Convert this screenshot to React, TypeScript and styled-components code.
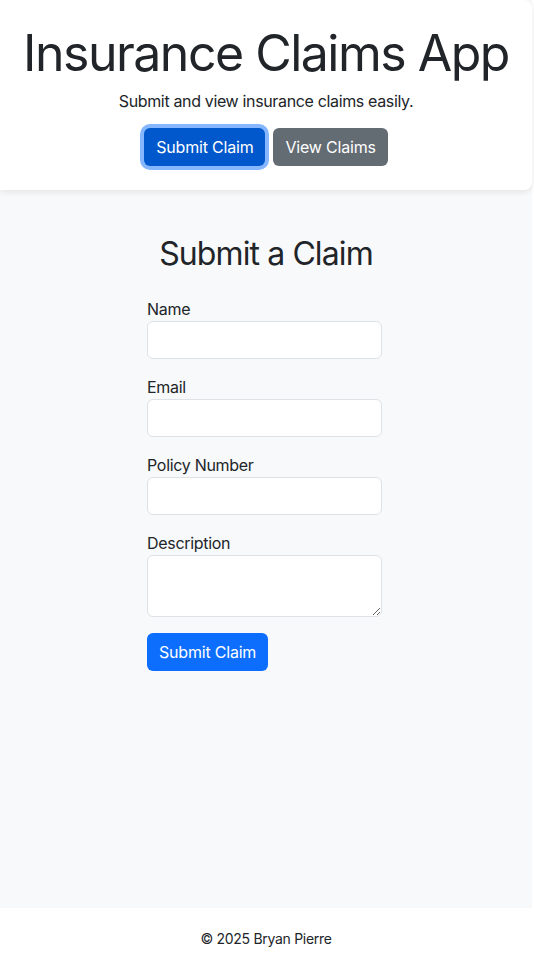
import React from "react";
import styled, { createGlobalStyle } from "styled-components";

const Global = createGlobalStyle`
  html, body { margin: 0; padding: 0; background: #ffffff; }
  body { font-family: Inter, "Noto Sans", sans-serif; color: #212529; -webkit-font-smoothing: antialiased; }
  * { box-sizing: border-box; }
`;

const Page = styled.div`
  width: 532px;
  min-height: 965px;
  display: flex;
  flex-direction: column;
  background: #f8f9fa;
`;

const Header = styled.header`
  background: #ffffff;
  border-radius: 0 8px 8px 0;
  box-shadow: 0 2px 6px rgba(0, 0, 0, 0.09);
  padding: 22px 0 24px;
  display: flex;
  flex-direction: column;
  align-items: center;
  position: relative;
  z-index: 1;
`;

const Title = styled.h1`
  margin: 0;
  font-size: 50px;
  font-weight: 400;
  line-height: 62px;
  letter-spacing: -1.5px;
`;

const Subtitle = styled.p`
  margin: 5px 0 15px;
  font-size: 16px;
  line-height: 24px;
  letter-spacing: -0.35px;
`;

const ButtonRow = styled.div`
  display: flex;
  gap: 8px;
`;

const Btn = styled.button<{ $variant: "primary" | "active" | "secondary" }>`
  font-family: inherit;
  font-size: 16px;
  line-height: 24px;
  letter-spacing: -0.2px;
  padding: 6px 12px;
  height: 38px;
  border: none;
  border-radius: 6px;
  color: #ffffff;
  cursor: pointer;
  background: ${(p) =>
    p.$variant === "active" ? "#0058cc" : p.$variant === "secondary" ? "#636b73" : "#0d6efd"};
  box-shadow: ${(p) => (p.$variant === "active" ? "0 0 0 4px #86b7fe" : "none")};
`;

const Main = styled.main`
  flex: 1;
  display: flex;
  flex-direction: column;
  align-items: center;
  padding-top: 45px;
`;

const Heading = styled.h2`
  margin: 0 0 24px;
  font-size: 32px;
  font-weight: 400;
  line-height: 38px;
  letter-spacing: -0.9px;
`;

const Form = styled.form`
  width: 235px;
  margin-right: 3px;
  display: flex;
  flex-direction: column;
  gap: 16px;
`;

const Field = styled.div`
  display: flex;
  flex-direction: column;
`;

const Label = styled.label`
  font-size: 16px;
  line-height: 24px;
  letter-spacing: -0.3px;
`;

const Input = styled.input`
  height: 38px;
  width: 100%;
  border: 1px solid #dee2e6;
  border-radius: 6px;
  background: #ffffff;
  font-family: inherit;
  font-size: 16px;
  padding: 6px 12px;
`;

const TextArea = styled.textarea`
  height: 62px;
  width: 100%;
  border: 1px solid #dee2e6;
  border-radius: 6px;
  background: #ffffff;
  font-family: inherit;
  font-size: 16px;
  padding: 6px 12px;
  display: block;
`;

const SubmitRow = styled.div`
  display: flex;
`;

const Footer = styled.footer`
  height: 57px;
  background: #ffffff;
  display: flex;
  align-items: center;
  justify-content: center;
  font-size: 14px;
  letter-spacing: -0.3px;
  color: #212529;
  padding-top: 3px;
`;

export default function App() {
  return (
    <>
      <Global />
      <Page>
        <Header>
          <Title>Insurance Claims App</Title>
          <Subtitle>Submit and view insurance claims easily.</Subtitle>
          <ButtonRow>
            <Btn $variant="active">Submit Claim</Btn>
            <Btn $variant="secondary">View Claims</Btn>
          </ButtonRow>
        </Header>
        <Main>
          <Heading>Submit a Claim</Heading>
          <Form onSubmit={(e) => e.preventDefault()}>
            <Field>
              <Label htmlFor="name">Name</Label>
              <Input id="name" type="text" />
            </Field>
            <Field>
              <Label htmlFor="email">Email</Label>
              <Input id="email" type="email" />
            </Field>
            <Field>
              <Label htmlFor="policy">Policy Number</Label>
              <Input id="policy" type="text" />
            </Field>
            <Field>
              <Label htmlFor="desc">Description</Label>
              <TextArea id="desc" />
            </Field>
            <SubmitRow>
              <Btn $variant="primary" type="submit">Submit Claim</Btn>
            </SubmitRow>
          </Form>
        </Main>
        <Footer>© 2025 Bryan Pierre</Footer>
      </Page>
    </>
  );
}
